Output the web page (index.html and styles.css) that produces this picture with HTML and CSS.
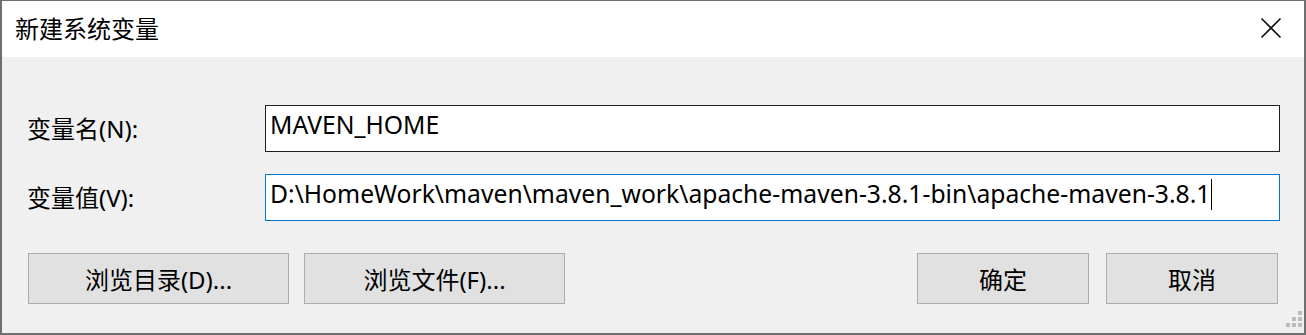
FILE: index.html
```html
<!DOCTYPE html>
<html lang="zh-CN">
<head>
    <meta charset="UTF-8">
    <title>新建系统变量</title>
    <link rel="stylesheet" href="styles.css">
</head>
<body>
    <div class="dialog">
        <div class="titlebar">
            <span class="title">新建系统变量</span>
            <a href="javascript:;" class="btn-close">
                <svg width="22" height="22" viewBox="0 0 22 22"><path d="M1.5 1.5 L20.5 20.5 M20.5 1.5 L1.5 20.5" stroke="#111" stroke-width="1.6" fill="none"/></svg>
            </a>
        </div>
        <div class="content">
            <div class="row">
                <label class="label">变量名(N):</label>
                <div class="field">MAVEN_HOME</div>
            </div>
            <div class="row">
                <label class="label">变量值(V):</label>
                <div class="field focus">D:\HomeWork\maven\maven_work\apache-maven-3.8.1-bin\apache-maven-3.8.1<span class="caret"></span></div>
            </div>
            <div class="buttons">
                <div class="left">
                    <button class="btn wide">浏览目录(D)...</button>
                    <button class="btn wide">浏览文件(F)...</button>
                </div>
                <div class="right">
                    <button class="btn">确定</button>
                    <button class="btn">取消</button>
                </div>
            </div>
        </div>
        <div class="grip">
            <i></i><i></i><i></i><i></i><i></i><i></i>
        </div>
    </div>
</body>
</html>
```
FILE: styles.css
```css
*{padding:0;margin:0;box-sizing:border-box}
a{text-decoration:none}
body{
    background:#6f6f6f;
    font-family:"Noto Sans","Noto Sans CJK SC",sans-serif;
    color:#000;
    overflow:hidden;
}
.dialog{
    position:relative;
    margin:1px 2px 2px 2px;
    height:332px;
    background:#f0f0f0;
    display:flex;
    flex-direction:column;
}
.titlebar{
    height:56px;
    background:#fff;
    display:flex;
    align-items:center;
    justify-content:space-between;
    padding:0 22px 0 13px;
}
.title{
    font-size:24px;
    line-height:30px;
}
.btn-close{
    display:flex;
    width:22px;
    height:22px;
    margin-top:-2px;
}
.content{
    padding:48px 24px 0 25px;
}
.row{
    display:flex;
    align-items:center;
    margin-bottom:22px;
}
.row:nth-child(2){
    margin-bottom:32px;
}
.label{
    width:238px;
    font-size:24px;
    line-height:30px;
}
.field{
    flex:1;
    height:47px;
    background:#fff;
    border:1px solid #1e1e1e;
    font-size:24.7px;
    line-height:32px;
    padding:3px 4px 0 4px;
    white-space:nowrap;
    overflow:hidden;
}
.field.focus{
    border-color:#0078d7;
}
.caret{
    display:inline-block;
    width:1px;
    height:31px;
    background:#000;
    vertical-align:-7px;
    margin-left:1px;
}
.buttons{
    display:flex;
    justify-content:space-between;
    padding:0 2px 0 1px;
}
.left,.right{
    display:flex;
    gap:15px;
}
.right{
    gap:17px;
}
.btn{
    width:172px;
    height:51px;
    background:#e1e1e1;
    border:1px solid #adadad;
    font-family:inherit;
    font-size:24px;
    color:#000;
}
.btn.wide{
    width:261px;
}
.grip{
    position:absolute;
    right:2px;
    bottom:6px;
    width:16px;
    height:16px;
    display:grid;
    grid-template-columns:repeat(3,4px);
    grid-template-rows:repeat(3,4px);
    gap:2px;
}
.grip i{
    background:#bcbcbc;
}
.grip i:nth-child(1){grid-column:3;grid-row:1}
.grip i:nth-child(2){grid-column:2;grid-row:2}
.grip i:nth-child(3){grid-column:3;grid-row:2}
.grip i:nth-child(4){grid-column:1;grid-row:3}
.grip i:nth-child(5){grid-column:2;grid-row:3}
.grip i:nth-child(6){grid-column:3;grid-row:3}
```
